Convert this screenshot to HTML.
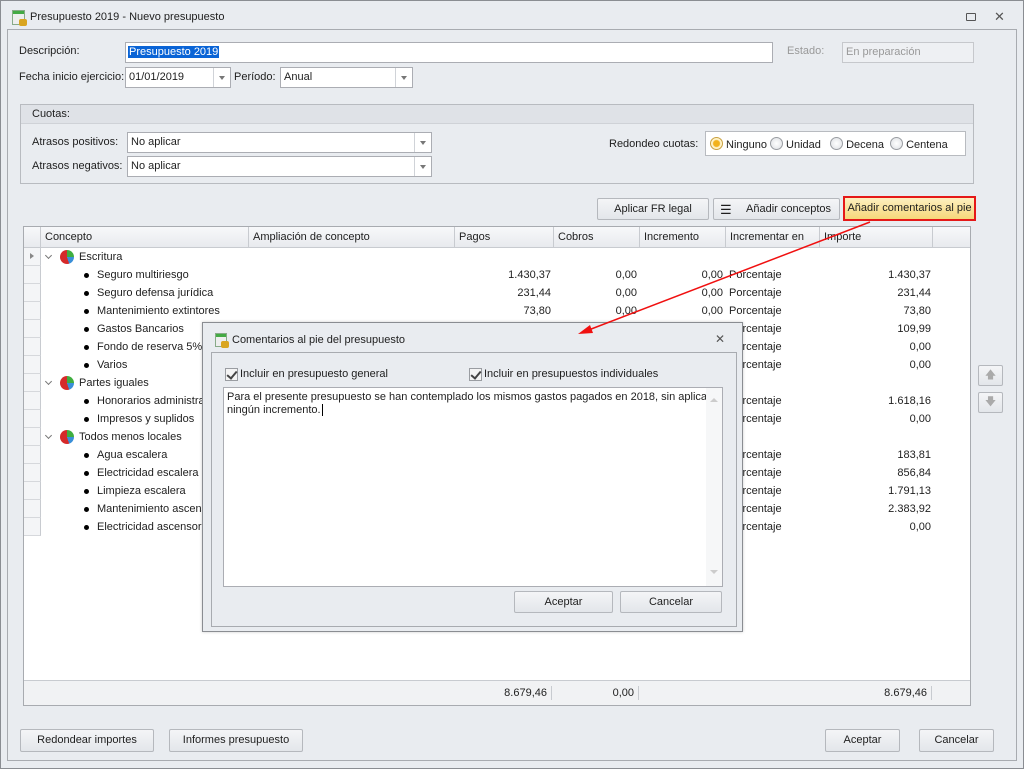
<!DOCTYPE html>
<html><head><meta charset="utf-8"><style>
*{box-sizing:border-box;margin:0;padding:0}
body{width:1024px;height:769px;background:#e9ecf0;font-family:"Liberation Sans",sans-serif;font-size:11px;color:#1e1e1e;position:relative;overflow:hidden}
.a{position:absolute;white-space:nowrap}
.box{position:absolute;background:#fff;border:1px solid #abadb3;white-space:nowrap}
.btn{position:absolute;border:1px solid #b5b8bd;border-radius:2px;background:linear-gradient(#f4f5f7,#e3e6ea);text-align:center;line-height:20px;white-space:nowrap}
.dd{position:absolute;top:0;right:0;width:17px;height:100%;border-left:1px solid #d0d3d8}
.dd:after{content:"";position:absolute;left:5px;top:8px;border:3px solid transparent;border-top:4px solid #777}
.r{position:absolute;height:18px;line-height:18px;left:0;width:946px}
.r span{position:absolute}
.num{text-align:right}
.ind{position:absolute;left:0;width:17px;height:18px;border-bottom:1px solid #d6d8dc;border-right:1px solid #c8cbd0;background:#f4f5f7}
.bul{position:absolute;left:60px;top:7px;width:5px;height:5px;border-radius:50%;background:#000}
.pie{position:absolute;left:36px;top:2px;width:14px;height:14px;border-radius:50%;background:conic-gradient(#3fae3f 0 25%,#3a8fd8 25% 45%,#d62a2a 45% 100%)}
.chev{position:absolute;left:22px;top:5px;width:5px;height:5px;border-right:1px solid #777;border-bottom:1px solid #777;transform:rotate(45deg)}
.radio{display:inline-block;width:13px;height:13px;border-radius:50%;border:1px solid #9a9da2;background:radial-gradient(#fff,#dcdfe3);vertical-align:-2px;margin-right:3px}
.hd{position:absolute;top:0;height:20px;line-height:20px;border-right:1px solid #c8cbd0;padding-left:4px}
.chk{position:absolute;width:13px;height:13px;border:1px solid #9a9da2;background:#f4f4f4}
.chk:after{content:"";position:absolute;left:3px;top:0px;width:4px;height:8px;border-right:2px solid #444;border-bottom:2px solid #444;transform:rotate(40deg)}
</style></head><body>
<div class="a" style="left:0;top:0;width:1024px;height:769px;border:1px solid #8a8d92"></div>
<div class="a" style="left:12px;top:10px;width:13px;height:15px;border:1px solid #8a8;background:linear-gradient(#4a4 0 3px,#eee 3px)"></div>
<div class="a" style="left:19px;top:19px;width:8px;height:7px;background:#d9a520;border-radius:2px"></div>
<div class="a" style="left:30px;top:11px">Presupuesto 2019 - Nuevo presupuesto</div>
<div class="a" style="left:966px;top:13px;width:10px;height:8px;border:1px solid #555;border-radius:1px"></div>
<div class="a" style="left:994px;top:9px;font-size:13px;color:#555">✕</div>
<div class="a" style="left:7px;top:29px;width:1010px;height:732px;border:1px solid #a8abb0"></div>

<div class="a" style="left:19px;top:45px">Descripción:</div>
<div class="box" style="left:125px;top:42px;width:648px;height:21px"><span class="a" style="left:2px;top:3px;background:#0a64d6;color:#fff;padding:0 1px">Presupuesto 2019</span></div>
<div class="a" style="left:787px;top:45px;color:#999">Estado:</div>
<div class="box" style="left:842px;top:42px;width:132px;height:21px;background:#eef0f3;border-color:#c6c8cc;color:#999;padding:3px 3px">En preparación</div>
<div class="a" style="left:19px;top:71px">Fecha inicio ejercicio:</div>
<div class="box" style="left:125px;top:67px;width:106px;height:21px;padding:3px 3px">01/01/2019<div class="dd"></div></div>
<div class="a" style="left:234px;top:71px">Período:</div>
<div class="box" style="left:280px;top:67px;width:133px;height:21px;padding:3px 3px">Anual<div class="dd"></div></div>

<div class="a" style="left:20px;top:104px;width:954px;height:80px;border:1px solid #b8bbc0"></div>
<div class="a" style="left:21px;top:105px;width:952px;height:19px;background:#dfe2e7;border-bottom:1px solid #cfd2d7"></div>
<div class="a" style="left:32px;top:108px">Cuotas:</div>
<div class="a" style="left:32px;top:136px">Atrasos positivos:</div>
<div class="box" style="left:127px;top:132px;width:305px;height:21px;padding:3px 3px">No aplicar<div class="dd"></div></div>
<div class="a" style="left:32px;top:160px">Atrasos negativos:</div>
<div class="box" style="left:127px;top:156px;width:305px;height:21px;padding:3px 3px">No aplicar<div class="dd"></div></div>
<div class="a" style="left:609px;top:138px">Redondeo cuotas:</div>
<div class="box" style="left:705px;top:131px;width:261px;height:25px;padding:5px 4px;border-color:#b8bbc0">
<span class="radio" style="background:radial-gradient(#f2b21c 0 3px,#fff3c8 4px);border-color:#c9a040"></span>Ninguno <span class="radio"></span>Unidad &nbsp;&nbsp;<span class="radio"></span>Decena &nbsp;<span class="radio"></span>Centena</div>

<div class="btn" style="left:597px;top:198px;width:112px;height:22px">Aplicar FR legal</div>
<div class="btn" style="left:713px;top:198px;width:127px;height:22px;padding-left:24px">Añadir conceptos
<span class="a" style="left:6px;top:4px;font-size:13px;line-height:13px">☰</span></div>
<div class="btn" style="left:843px;top:196px;width:133px;height:25px;border:2px solid #e51818;border-radius:0;background:linear-gradient(#fdf0c0,#f6d77a);line-height:21px">Añadir comentarios al pie</div>

<div class="a" style="left:23px;top:226px;width:948px;height:480px;background:#fff;border:1px solid #a8abb0;overflow:hidden">
 <div class="a" style="left:0;top:0;width:946px;height:21px;background:linear-gradient(#f7f8fa,#e8eaee);border-bottom:1px solid #c8cbd0">
  <div class="hd" style="left:0;width:17px"></div>
  <div class="hd" style="left:17px;width:208px">Concepto</div>
  <div class="hd" style="left:225px;width:206px">Ampliación de concepto</div>
  <div class="hd" style="left:431px;width:99px">Pagos</div>
  <div class="hd" style="left:530px;width:86px">Cobros</div>
  <div class="hd" style="left:616px;width:86px">Incremento</div>
  <div class="hd" style="left:702px;width:94px">Incrementar en</div>
  <div class="hd" style="left:796px;width:113px">Importe</div>
 </div>
 <div class="a" style="left:0;top:21px;width:946px">
  <div class="r" style="top:0"><div class="ind"><span style="left:6px;top:5px;border:3px solid transparent;border-left:4px solid #888;width:0;height:0"></span></div><div class="chev"></div><div class="pie"></div><span style="left:55px">Escritura</span></div>
  <div class="r" style="top:18px"><div class="ind"></div><div class="bul"></div><span style="left:73px">Seguro multiriesgo</span><span class="num" style="left:431px;width:96px">1.430,37</span><span class="num" style="left:530px;width:83px">0,00</span><span class="num" style="left:616px;width:83px">0,00</span><span style="left:705px">Porcentaje</span><span class="num" style="left:796px;width:111px">1.430,37</span></div>
  <div class="r" style="top:36px"><div class="ind"></div><div class="bul"></div><span style="left:73px">Seguro defensa jurídica</span><span class="num" style="left:431px;width:96px">231,44</span><span class="num" style="left:530px;width:83px">0,00</span><span class="num" style="left:616px;width:83px">0,00</span><span style="left:705px">Porcentaje</span><span class="num" style="left:796px;width:111px">231,44</span></div>
  <div class="r" style="top:54px"><div class="ind"></div><div class="bul"></div><span style="left:73px">Mantenimiento extintores</span><span class="num" style="left:431px;width:96px">73,80</span><span class="num" style="left:530px;width:83px">0,00</span><span class="num" style="left:616px;width:83px">0,00</span><span style="left:705px">Porcentaje</span><span class="num" style="left:796px;width:111px">73,80</span></div>
  <div class="r" style="top:72px"><div class="ind"></div><div class="bul"></div><span style="left:73px">Gastos Bancarios</span><span style="left:705px">Porcentaje</span><span class="num" style="left:796px;width:111px">109,99</span></div>
  <div class="r" style="top:90px"><div class="ind"></div><div class="bul"></div><span style="left:73px">Fondo de reserva 5%</span><span style="left:705px">Porcentaje</span><span class="num" style="left:796px;width:111px">0,00</span></div>
  <div class="r" style="top:108px"><div class="ind"></div><div class="bul"></div><span style="left:73px">Varios</span><span style="left:705px">Porcentaje</span><span class="num" style="left:796px;width:111px">0,00</span></div>
  <div class="r" style="top:126px"><div class="ind"></div><div class="chev"></div><div class="pie"></div><span style="left:55px">Partes iguales</span></div>
  <div class="r" style="top:144px"><div class="ind"></div><div class="bul"></div><span style="left:73px">Honorarios administración</span><span style="left:705px">Porcentaje</span><span class="num" style="left:796px;width:111px">1.618,16</span></div>
  <div class="r" style="top:162px"><div class="ind"></div><div class="bul"></div><span style="left:73px">Impresos y suplidos</span><span style="left:705px">Porcentaje</span><span class="num" style="left:796px;width:111px">0,00</span></div>
  <div class="r" style="top:180px"><div class="ind"></div><div class="chev"></div><div class="pie"></div><span style="left:55px">Todos menos locales</span></div>
  <div class="r" style="top:198px"><div class="ind"></div><div class="bul"></div><span style="left:73px">Agua escalera</span><span style="left:705px">Porcentaje</span><span class="num" style="left:796px;width:111px">183,81</span></div>
  <div class="r" style="top:216px"><div class="ind"></div><div class="bul"></div><span style="left:73px">Electricidad escalera</span><span style="left:705px">Porcentaje</span><span class="num" style="left:796px;width:111px">856,84</span></div>
  <div class="r" style="top:234px"><div class="ind"></div><div class="bul"></div><span style="left:73px">Limpieza escalera</span><span style="left:705px">Porcentaje</span><span class="num" style="left:796px;width:111px">1.791,13</span></div>
  <div class="r" style="top:252px"><div class="ind"></div><div class="bul"></div><span style="left:73px">Mantenimiento ascensor</span><span style="left:705px">Porcentaje</span><span class="num" style="left:796px;width:111px">2.383,92</span></div>
  <div class="r" style="top:270px"><div class="ind"></div><div class="bul"></div><span style="left:73px">Electricidad ascensor</span><span style="left:705px">Porcentaje</span><span class="num" style="left:796px;width:111px">0,00</span></div>
 </div>
 <div class="a" style="left:0;top:453px;width:946px;height:25px;background:#f1f2f4;border-top:1px solid #c8cbd0;line-height:24px">
  <span class="a num" style="left:431px;width:92px">8.679,46</span><span class="a" style="left:527px;top:5px;height:14px;border-left:1px solid #c8cbd0"></span>
  <span class="a num" style="left:530px;width:80px">0,00</span><span class="a" style="left:614px;top:5px;height:14px;border-left:1px solid #c8cbd0"></span>
  <span class="a num" style="left:796px;width:107px">8.679,46</span><span class="a" style="left:907px;top:5px;height:14px;border-left:1px solid #c8cbd0"></span>
 </div>
</div>
<div class="btn" style="left:978px;top:365px;width:25px;height:21px;color:#aaa;line-height:19px">🡅</div>
<div class="btn" style="left:978px;top:392px;width:25px;height:21px;color:#aaa;line-height:19px">🡇</div>

<div class="btn" style="left:20px;top:729px;width:134px;height:23px">Redondear importes</div>
<div class="btn" style="left:169px;top:729px;width:134px;height:23px">Informes presupuesto</div>
<div class="btn" style="left:825px;top:729px;width:75px;height:23px">Aceptar</div>
<div class="btn" style="left:919px;top:729px;width:75px;height:23px">Cancelar</div>

<div class="a" style="left:202px;top:322px;width:541px;height:310px;background:#e9ecf0;border:1px solid #8a8d92;box-shadow:0 0 3px rgba(0,0,0,.2)">
 <div class="a" style="left:12px;top:10px;width:12px;height:14px;border:1px solid #8a8;background:linear-gradient(#4a4 0 3px,#eee 3px)"></div>
 <div class="a" style="left:18px;top:18px;width:8px;height:7px;background:#d9a520;border-radius:2px"></div>
 <div class="a" style="left:29px;top:11px">Comentarios al pie del presupuesto</div>
 <div class="a" style="left:512px;top:9px;font-size:12px;color:#555">✕</div>
 <div class="a" style="left:8px;top:29px;width:526px;height:275px;border:1px solid #a8abb0"></div>
 <div class="chk" style="left:22px;top:45px"></div><div class="a" style="left:37px;top:45px">Incluir en presupuesto general</div>
 <div class="chk" style="left:266px;top:45px"></div><div class="a" style="left:281px;top:45px">Incluir en presupuestos individuales</div>
 <div class="box" style="left:20px;top:64px;width:500px;height:200px;padding:3px 3px;line-height:13px">Para el presente presupuesto se han contemplado los mismos gastos pagados en 2018, sin aplicar<br>ningún incremento.<span style="border-left:1px solid #000;margin-left:1px"></span>
  <div class="a" style="right:0;top:0;width:16px;height:198px;background:#f6f7f8"><span class="a" style="left:4px;top:6px;border:4px solid transparent;border-bottom:4px solid #ccc"></span><span class="a" style="left:4px;top:182px;border:4px solid transparent;border-top:4px solid #ccc"></span></div>
 </div>
 <div class="btn" style="left:311px;top:268px;width:99px;height:22px">Aceptar</div>
 <div class="btn" style="left:417px;top:268px;width:102px;height:22px">Cancelar</div>
</div>

<svg class="a" style="left:0;top:0" width="1024" height="769"><line x1="870" y1="222" x2="586" y2="331" stroke="#f01010" stroke-width="1.5"/><polygon points="578,334 590,325 593,333" fill="#f01010"/></svg>
</body></html>
